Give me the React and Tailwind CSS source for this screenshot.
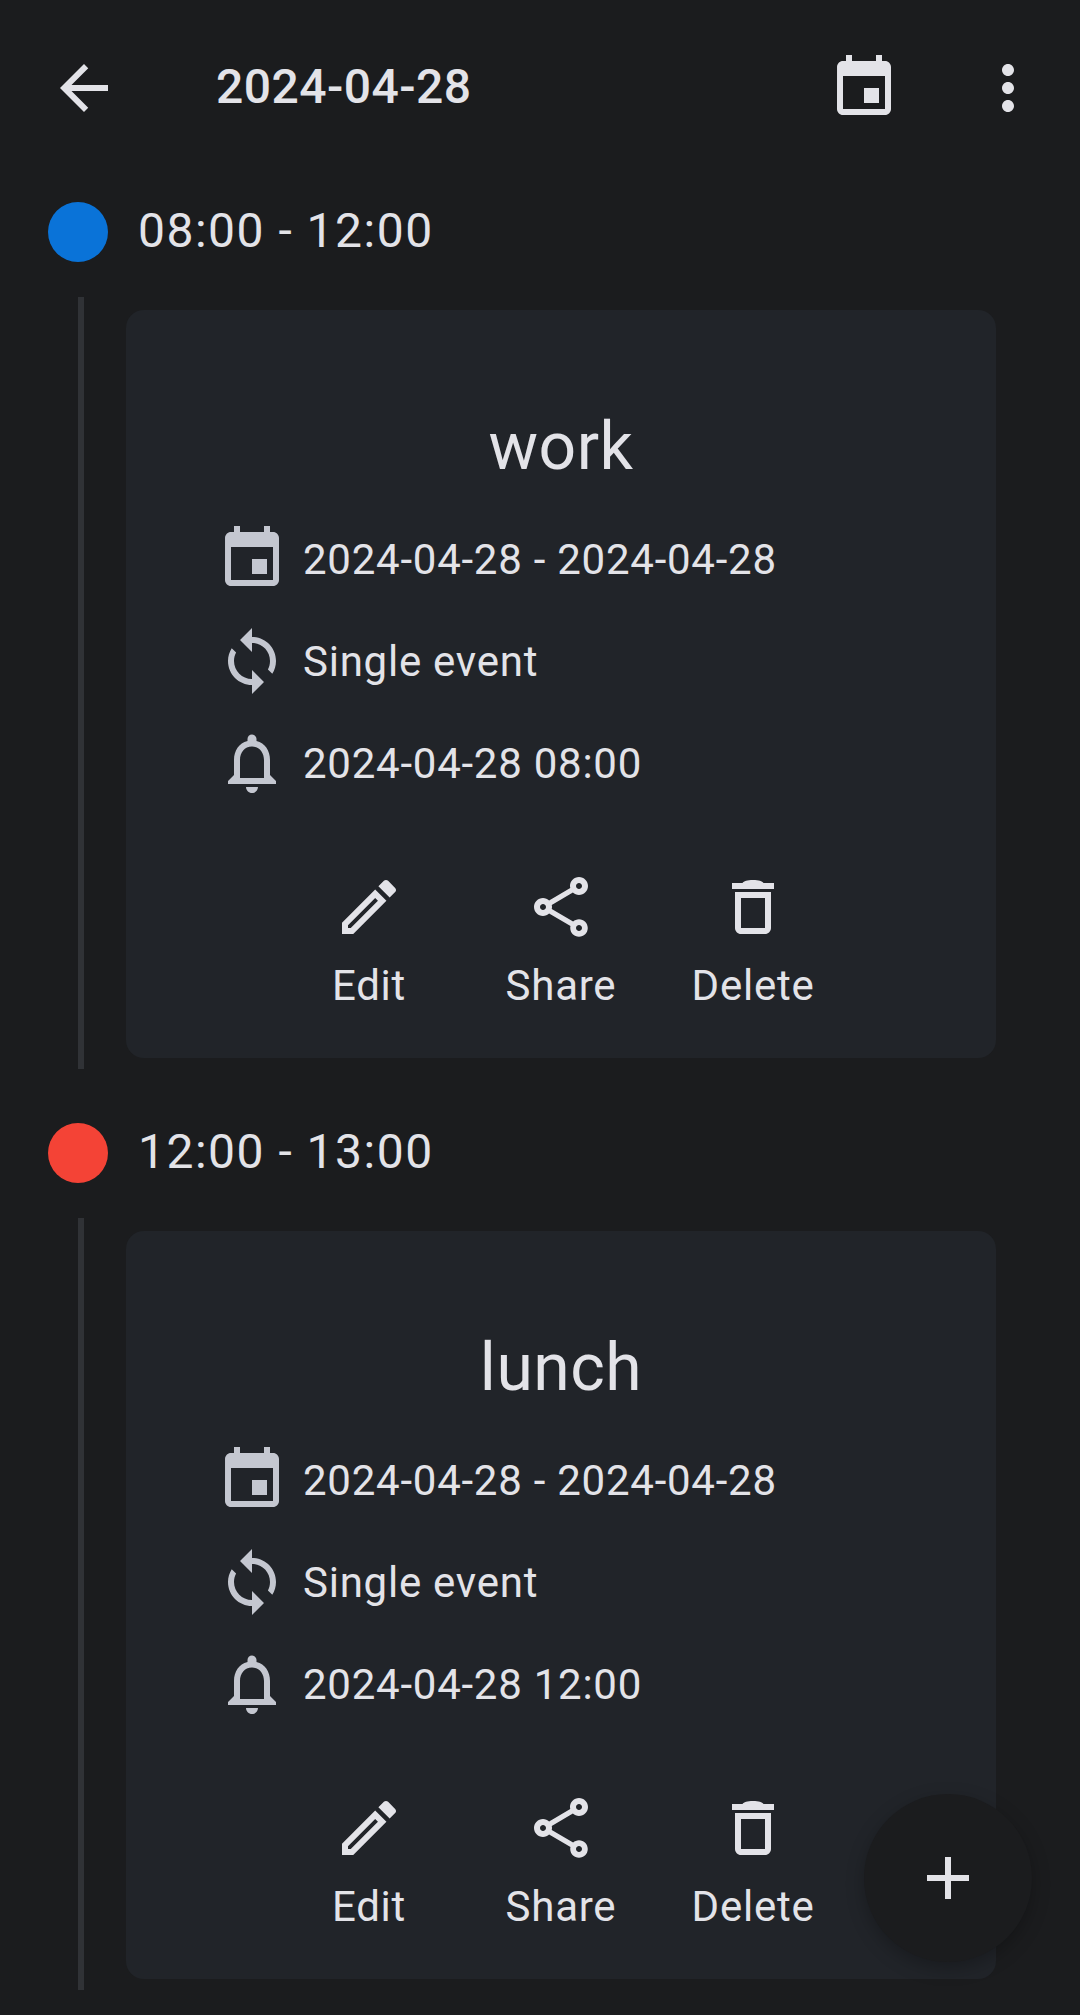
const ICONS = {
  back: 'M20 11H7.83l5.59-5.59L12 4l-8 8 8 8 1.41-1.41L7.83 13H20v-2z',
  event: 'M17 12h-5v5h5v-5zM16 1v2H8V1H6v2H5c-1.11 0-1.99.9-1.99 2L3 19c0 1.1.89 2 2 2h14c1.1 0 2-.9 2-2V5c0-1.1-.9-2-2-2h-1V1h-2zm3 18H5V8h14v11z',
  more: 'M12 8c1.1 0 2-.9 2-2s-.9-2-2-2-2 .9-2 2 .9 2 2 2zm0 2c-1.1 0-2 .9-2 2s.9 2 2 2 2-.9 2-2-.9-2-2-2zm0 6c-1.1 0-2 .9-2 2s.9 2 2 2 2-.9 2-2-.9-2-2-2z',
  sync: 'M12 4V1L8 5l4 4V6c3.31 0 6 2.69 6 6 0 1.01-.25 1.97-.7 2.8l1.46 1.46C19.54 15.03 20 13.57 20 12c0-4.42-3.58-8-8-8zm0 14c-3.31 0-6-2.69-6-6 0-1.01.25-1.97.7-2.8L5.24 7.74C4.46 8.97 4 10.43 4 12c0 4.42 3.58 8 8 8v3l4-4-4-4v3z',
  bell: 'M12 22c1.1 0 2-.9 2-2h-4c0 1.1.9 2 2 2zm6-6v-5c0-3.07-1.63-5.64-4.5-6.32V4c0-.83-.67-1.5-1.5-1.5s-1.5.67-1.5 1.5v.68C7.64 5.36 6 7.92 6 11v5l-2 2v1h16v-1l-2-2zm-2 1H8v-6c0-2.48 1.51-4.5 4-4.5s4 2.02 4 4.5v6z',
  edit: 'M3 17.25V21h3.75L17.81 9.94l-3.75-3.75L3 17.25zM5.92 19H5v-.92l9.06-9.06.92.92L5.92 19zM20.71 5.63l-2.34-2.34c-.2-.2-.45-.29-.71-.29s-.51.1-.7.29l-1.83 1.83 3.75 3.75 1.83-1.83c.39-.39.39-1.02 0-1.41z',
  share: 'M18 16.08c-.76 0-1.44.3-1.96.77L8.91 12.7c.05-.23.09-.46.09-.7s-.04-.47-.09-.7l7.05-4.11c.54.5 1.25.81 2.04.81 1.66 0 3-1.34 3-3s-1.34-3-3-3-3 1.34-3 3c0 .24.04.47.09.7L8.04 9.81C7.5 9.31 6.79 9 6 9c-1.66 0-3 1.34-3 3s1.34 3 3 3c.79 0 1.5-.31 2.04-.81l7.12 4.16c-.05.21-.08.43-.08.65 0 1.61 1.31 2.92 2.92 2.92 1.61 0 2.92-1.31 2.92-2.92s-1.31-2.92-2.92-2.92zM18 4c.55 0 1 .45 1 1s-.45 1-1 1-1-.45-1-1 .45-1 1-1zM6 13c-.55 0-1-.45-1-1s.45-1 1-1 1 .45 1 1-.45 1-1 1zm12 7.02c-.55 0-1-.45-1-1s.45-1 1-1 1 .45 1 1-.45 1-1 1z',
  trash: 'M6 19c0 1.1.9 2 2 2h8c1.1 0 2-.9 2-2V7H6v12zM8 9h8v10H8V9zm7.5-5c-.5-.7-1.5-1-3.5-1s-3 .3-3.5 1H5v2h14V4h-3.5z',
  add: 'M19 13h-6v6h-2v-6H5v-2h6V5h2v6h6v2z',
};

function Icon({ d, className }) {
  return (
    <svg viewBox="0 0 24 24" fill="currentColor" className={`w-[72px] h-[72px] shrink-0 ${className ?? ''}`}>
      <path d={d} />
    </svg>
  );
}

function InfoRow({ icon, text }) {
  return (
    <div className="flex items-center h-[102px]">
      <Icon d={icon} className="text-[#c4c7d0]" />
      <span className="ml-[15px] mt-[2px] text-[42px] leading-[56px] tracking-[0.75px]">{text}</span>
    </div>
  );
}

function Action({ icon, label }) {
  return (
    <div className="w-[192px] flex flex-col items-center">
      <Icon d={icon} />
      <span className="mt-[15px] text-[42px] leading-[56px] tracking-[0.75px]">{label}</span>
    </div>
  );
}

function EventBlock({ dot, time, title, reminder }) {
  return (
    <div className="pl-[48px] pb-[54px]">
      <div className="flex items-center h-[60px]">
        <div className={`w-[60px] h-[60px] rounded-full ${dot}`} />
        <span className="ml-[30px] mb-[2px] text-[48px] leading-[60px] tracking-[1.5px]">{time}</span>
      </div>
      <div className="flex mt-[35px] ml-[30px]">
        <div className="w-[6px] h-[772px] bg-[#303236]" />
        <div className="ml-[42px] mt-[13px] w-[870px] h-[748px] rounded-[18px] bg-[#212429] pt-[93px]">
          <div className="text-center text-[66px] leading-[88px] tracking-[0.5px]">{title}</div>
          <div className="mt-[17px] pl-[90px]">
            <InfoRow icon={ICONS.event} text="2024-04-28 - 2024-04-28" />
            <InfoRow icon={ICONS.sync} text="Single event" />
            <InfoRow icon={ICONS.bell} text={reminder} />
          </div>
          <div className="mt-[57px] flex justify-center">
            <Action icon={ICONS.edit} label="Edit" />
            <Action icon={ICONS.share} label="Share" />
            <Action icon={ICONS.trash} label="Delete" />
          </div>
        </div>
      </div>
    </div>
  );
}

export default function App() {
  return (
    <div className="relative w-[1080px] h-[2015px] overflow-hidden bg-[#1b1c1e] text-[#e3e3e8] font-['Roboto',sans-serif]">
      <header className="flex items-center h-[176px] pl-[48px] pr-[36px]">
        <Icon d={ICONS.back} />
        <span className="ml-[96px] mb-[2px] text-[48px] font-medium tracking-[0.45px]">2024-04-28</span>
        <Icon d={ICONS.event} className="ml-auto" />
        <Icon d={ICONS.more} className="ml-[72px]" />
      </header>
      <div className="mt-[26px]">
        <EventBlock dot="bg-[#0a73d8]" time="08:00 - 12:00" title="work" reminder="2024-04-28 08:00" />
        <EventBlock dot="bg-[#f44336]" time="12:00 - 13:00" title="lunch" reminder="2024-04-28 12:00" />
      </div>
      <button className="absolute left-[864px] top-[1794px] w-[168px] h-[168px] rounded-full bg-[#1b1c1e] flex items-center justify-center shadow-[0_6px_18px_rgba(0,0,0,0.25)]">
        <Icon d={ICONS.add} />
      </button>
    </div>
  );
}
